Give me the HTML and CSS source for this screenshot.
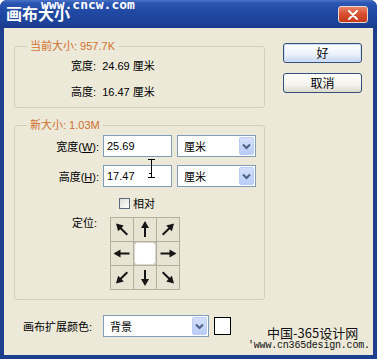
FILE: index.html
```html
<!DOCTYPE html>
<html lang="zh">
<head>
<meta charset="utf-8">
<title>画布大小</title>
<link rel="stylesheet" href="styles.css">
</head>
<body>
<div class="win">
  <div class="titlebar">
    <span class="title">画布大小</span>
    <span class="wm-top">www.cncw.com</span>
    <div class="close">
      <svg width="12" height="10" viewBox="0 0 12 10"><path d="M2 1 L10 9 M10 1 L2 9" stroke="#fff" stroke-width="2" stroke-linecap="round"/></svg>
    </div>
  </div>
  <div class="client">
    <div class="top">
      <div class="groups">
        <div class="group g1">
          <span class="legend">当前大小: 957.7K</span>
          <div class="info">宽度:&nbsp; <span class="num">24.69</span> 厘米</div>
          <div class="info">高度:&nbsp; <span class="num">16.47</span> 厘米</div>
        </div>
        <div class="group g2">
          <span class="legend">新大小: 1.03M</span>
          <div class="row">
            <span class="lbl">宽度(<u>W</u>):</span>
            <div class="input"><span class="num">25.69</span></div>
            <div class="select unit"><span>厘米</span><span class="dd"><svg width="9" height="7" viewBox="0 0 9 7"><path d="M1 1.5 L4.5 5 L8 1.5" fill="none" stroke="#4d6185" stroke-width="2"/></svg></span></div>
          </div>
          <div class="row row2">
            <span class="lbl">高度(<u>H</u>):</span>
            <div class="input"><span class="num">17.47</span></div>
            <div class="select unit"><span>厘米</span><span class="dd"><svg width="9" height="7" viewBox="0 0 9 7"><path d="M1 1.5 L4.5 5 L8 1.5" fill="none" stroke="#4d6185" stroke-width="2"/></svg></span></div>
          </div>
          <div class="check-row">
            <span class="checkbox"></span><span>相对</span>
          </div>
          <div class="anchor-row">
            <span class="anchor-lbl">定位:</span>
            <div class="anchor">
              <div class="cell"><svg width="22" height="23" viewBox="0 0 22 23"><g transform="rotate(-45 11 11.5)"><path d="M10 19 L10 10 L7 10 L11 3 L15 10 L12 10 L12 19 Z"/></g></svg></div>
              <div class="cell"><svg width="22" height="23" viewBox="0 0 22 23"><g><path d="M10 19 L10 10 L7 10 L11 3 L15 10 L12 10 L12 19 Z"/></g></svg></div>
              <div class="cell"><svg width="22" height="23" viewBox="0 0 22 23"><g transform="rotate(45 11 11.5)"><path d="M10 19 L10 10 L7 10 L11 3 L15 10 L12 10 L12 19 Z"/></g></svg></div>
              <div class="cell"><svg width="22" height="23" viewBox="0 0 22 23"><g transform="rotate(-90 11 11.5)"><path d="M10 19 L10 10 L7 10 L11 3 L15 10 L12 10 L12 19 Z"/></g></svg></div>
              <div class="cell center"></div>
              <div class="cell"><svg width="22" height="23" viewBox="0 0 22 23"><g transform="rotate(90 11 11.5)"><path d="M10 19 L10 10 L7 10 L11 3 L15 10 L12 10 L12 19 Z"/></g></svg></div>
              <div class="cell"><svg width="22" height="23" viewBox="0 0 22 23"><g transform="rotate(-135 11 11.5)"><path d="M10 19 L10 10 L7 10 L11 3 L15 10 L12 10 L12 19 Z"/></g></svg></div>
              <div class="cell"><svg width="22" height="23" viewBox="0 0 22 23"><g transform="rotate(180 11 11.5)"><path d="M10 19 L10 10 L7 10 L11 3 L15 10 L12 10 L12 19 Z"/></g></svg></div>
              <div class="cell"><svg width="22" height="23" viewBox="0 0 22 23"><g transform="rotate(135 11 11.5)"><path d="M10 19 L10 10 L7 10 L11 3 L15 10 L12 10 L12 19 Z"/></g></svg></div>
            </div>
          </div>
        </div>
      </div>
      <div class="buttons">
        <div class="btn default">好</div>
        <div class="btn">取消</div>
      </div>
    </div>
    <div class="bottom">
      <span class="ext-lbl">画布扩展颜色:</span>
      <div class="select ext"><span>背景</span><span class="dd"><svg width="9" height="7" viewBox="0 0 9 7"><path d="M1 1.5 L4.5 5 L8 1.5" fill="none" stroke="#4d6185" stroke-width="2"/></svg></span></div>
      <span class="swatch"></span>
    </div>
    <svg class="ibeam" width="9" height="19" viewBox="0 0 9 19"><path d="M1 0.5 H8 M4.5 0.5 V18.5 M1 18.5 H8 M2 14.5 H4.5" fill="none" stroke="#000" stroke-width="1"/></svg>
    <div class="wm">
      <div class="wm1">中国-365设计网</div>
      <div class="wm2">'www.cn365design.com.</div>
    </div>
  </div>
</div>
</body>
</html>
```
FILE: styles.css
```css
body {
  margin: 0;
  background: #fff;
}
.win {
  width: 377px;
  height: 359px;
  display: flex;
  flex-direction: column;
  background: #1e3f8e;
  border-radius: 7px 7px 0 0;
  overflow: hidden;
  font-family: "Liberation Sans", "Noto Sans CJK SC", sans-serif;
  font-size: 11px;
  color: #000;
}
.titlebar {
  height: 28px;
  flex: none;
  position: relative;
  background: linear-gradient(#4a72c8 0, #2b56b2 3px, #2149a3 12px, #1d4399 22px, #1a3b8c 28px);
}
.title {
  position: absolute;
  left: 6px;
  top: 3px;
  font-family: "Noto Sans CJK SC", sans-serif;
  font-weight: bold;
  font-size: 16px;
  line-height: 20px;
  color: #fff;
}
.wm-top {
  position: absolute;
  left: 41px;
  top: 0;
  font-family: "DejaVu Sans Mono", monospace;
  font-weight: bold;
  font-size: 13px;
  line-height: 9px;
  color: #fff;
}
.close {
  position: absolute;
  left: 338px;
  top: 6px;
  width: 30px;
  height: 17px;
  box-sizing: border-box;
  border: 1px solid #e8d8d0;
  border-radius: 3px;
  background: linear-gradient(#e8856a, #d9502f 45%, #c33a1d);
  display: flex;
  align-items: center;
  justify-content: center;
}
.client {
  flex: 1;
  margin: 0 4px 4px 4px;
  background: #ece9d8;
  position: relative;
  display: flex;
  flex-direction: column;
}
.top {
  display: flex;
  align-items: flex-start;
  padding: 15px 0 0 10px;
}
.groups {
  width: 251px;
  margin-top: 3px;
  display: flex;
  flex-direction: column;
  gap: 17px;
}
.group {
  position: relative;
  box-sizing: border-box;
  border: 1px solid #d0d0bf;
  border-radius: 3px;
}
.legend {
  position: absolute;
  left: 12px;
  top: -8px;
  padding: 0 3px;
  background: #ece9d8;
  color: #d0702f;
  line-height: 14px;
}
.g1 {
  height: 62px;
  padding: 12px 0 0 56px;
  display: flex;
  flex-direction: column;
  gap: 12px;
}
.info {
  line-height: 14px;
}
.g2 {
  height: 175px;
  padding-top: 9px;
  display: flex;
  flex-direction: column;
}
.row {
  display: flex;
  align-items: center;
  height: 22px;
}
.row2 {
  margin-top: 8px;
}
.lbl {
  width: 84px;
  margin-right: 4px;
  text-align: right;
}
.input {
  width: 69px;
  height: 22px;
  box-sizing: border-box;
  margin-right: 5px;
  padding-left: 3px;
  border: 1px solid #7f9db9;
  background: #fff;
  line-height: 20px;
}
.select {
  height: 22px;
  box-sizing: border-box;
  border: 1px solid #7f9db9;
  background: #fff;
  display: flex;
  align-items: center;
  justify-content: space-between;
  padding: 0 1px 0 6px;
}
.unit {
  width: 79px;
}
.dd {
  width: 15px;
  height: 18px;
  box-sizing: border-box;
  border: 1px solid #bccdf5;
  border-radius: 2px;
  background: linear-gradient(#d4e0fb, #b9cdf7);
  display: flex;
  align-items: center;
  justify-content: center;
}
.check-row {
  display: flex;
  align-items: center;
  gap: 3px;
  height: 14px;
  margin-top: 9px;
  padding-left: 104px;
}
.checkbox {
  width: 11px;
  height: 11px;
  box-sizing: border-box;
  border: 1px solid #5a6b80;
  background: linear-gradient(135deg, #dcdcd6, #fff);
}
.anchor-row {
  display: flex;
  align-items: flex-start;
  margin-top: 7px;
}
.anchor-lbl {
  width: 82px;
  margin-right: 13px;
  text-align: right;
  line-height: 14px;
  margin-top: -1px;
}
.anchor {
  display: grid;
  grid-template-columns: repeat(3, 22px);
  grid-template-rows: repeat(3, 23px);
  gap: 1px;
  padding: 1px;
  background: #b4b09e;
}
.cell {
  background: #e7e4d3;
  display: flex;
  align-items: center;
  justify-content: center;
}
.cell svg path {
  fill: #151515;
}
.center {
  background: #fff;
  border-radius: 4px;
  box-shadow: inset 0 0 0 1px #d8d6cc;
}
.buttons {
  margin-left: 18px;
  display: flex;
  flex-direction: column;
  gap: 10px;
}
.btn {
  width: 79px;
  height: 20px;
  box-sizing: border-box;
  border: 1px solid #33507a;
  border-radius: 3px;
  background: linear-gradient(#fff, #f4f3ee 60%, #dcd8cc);
  font-family: "Noto Sans CJK SC", sans-serif;
  font-size: 12px;
  line-height: 18px;
  text-align: center;
}
.btn.default {
  background: linear-gradient(#fff, #eef2fb 55%, #c6d4f2);
  box-shadow: inset 0 0 0 1px #cfe0fb;
}
.bottom {
  display: flex;
  align-items: center;
  margin-top: 15px;
  padding-left: 19px;
}
.ext-lbl {
  width: 80px;
}
.ext {
  width: 106px;
  margin-right: 5px;
}
.swatch {
  width: 17px;
  height: 18px;
  box-sizing: border-box;
  border: 1px solid #000;
  background: #fff;
}
.ibeam {
  position: absolute;
  left: 143px;
  top: 131px;
}
.wm {
  position: absolute;
  left: 244px;
  top: 298px;
}
.wm1 {
  padding-left: 19px;
  font-family: "Noto Sans CJK SC", sans-serif;
  font-size: 13px;
  line-height: 13px;
  color: #111;
}
.wm2 {
  margin-top: 1px;
  font-family: "Liberation Mono", monospace;
  font-size: 10px;
  line-height: 11px;
  letter-spacing: -0.2px;
  color: #111;
}
```
